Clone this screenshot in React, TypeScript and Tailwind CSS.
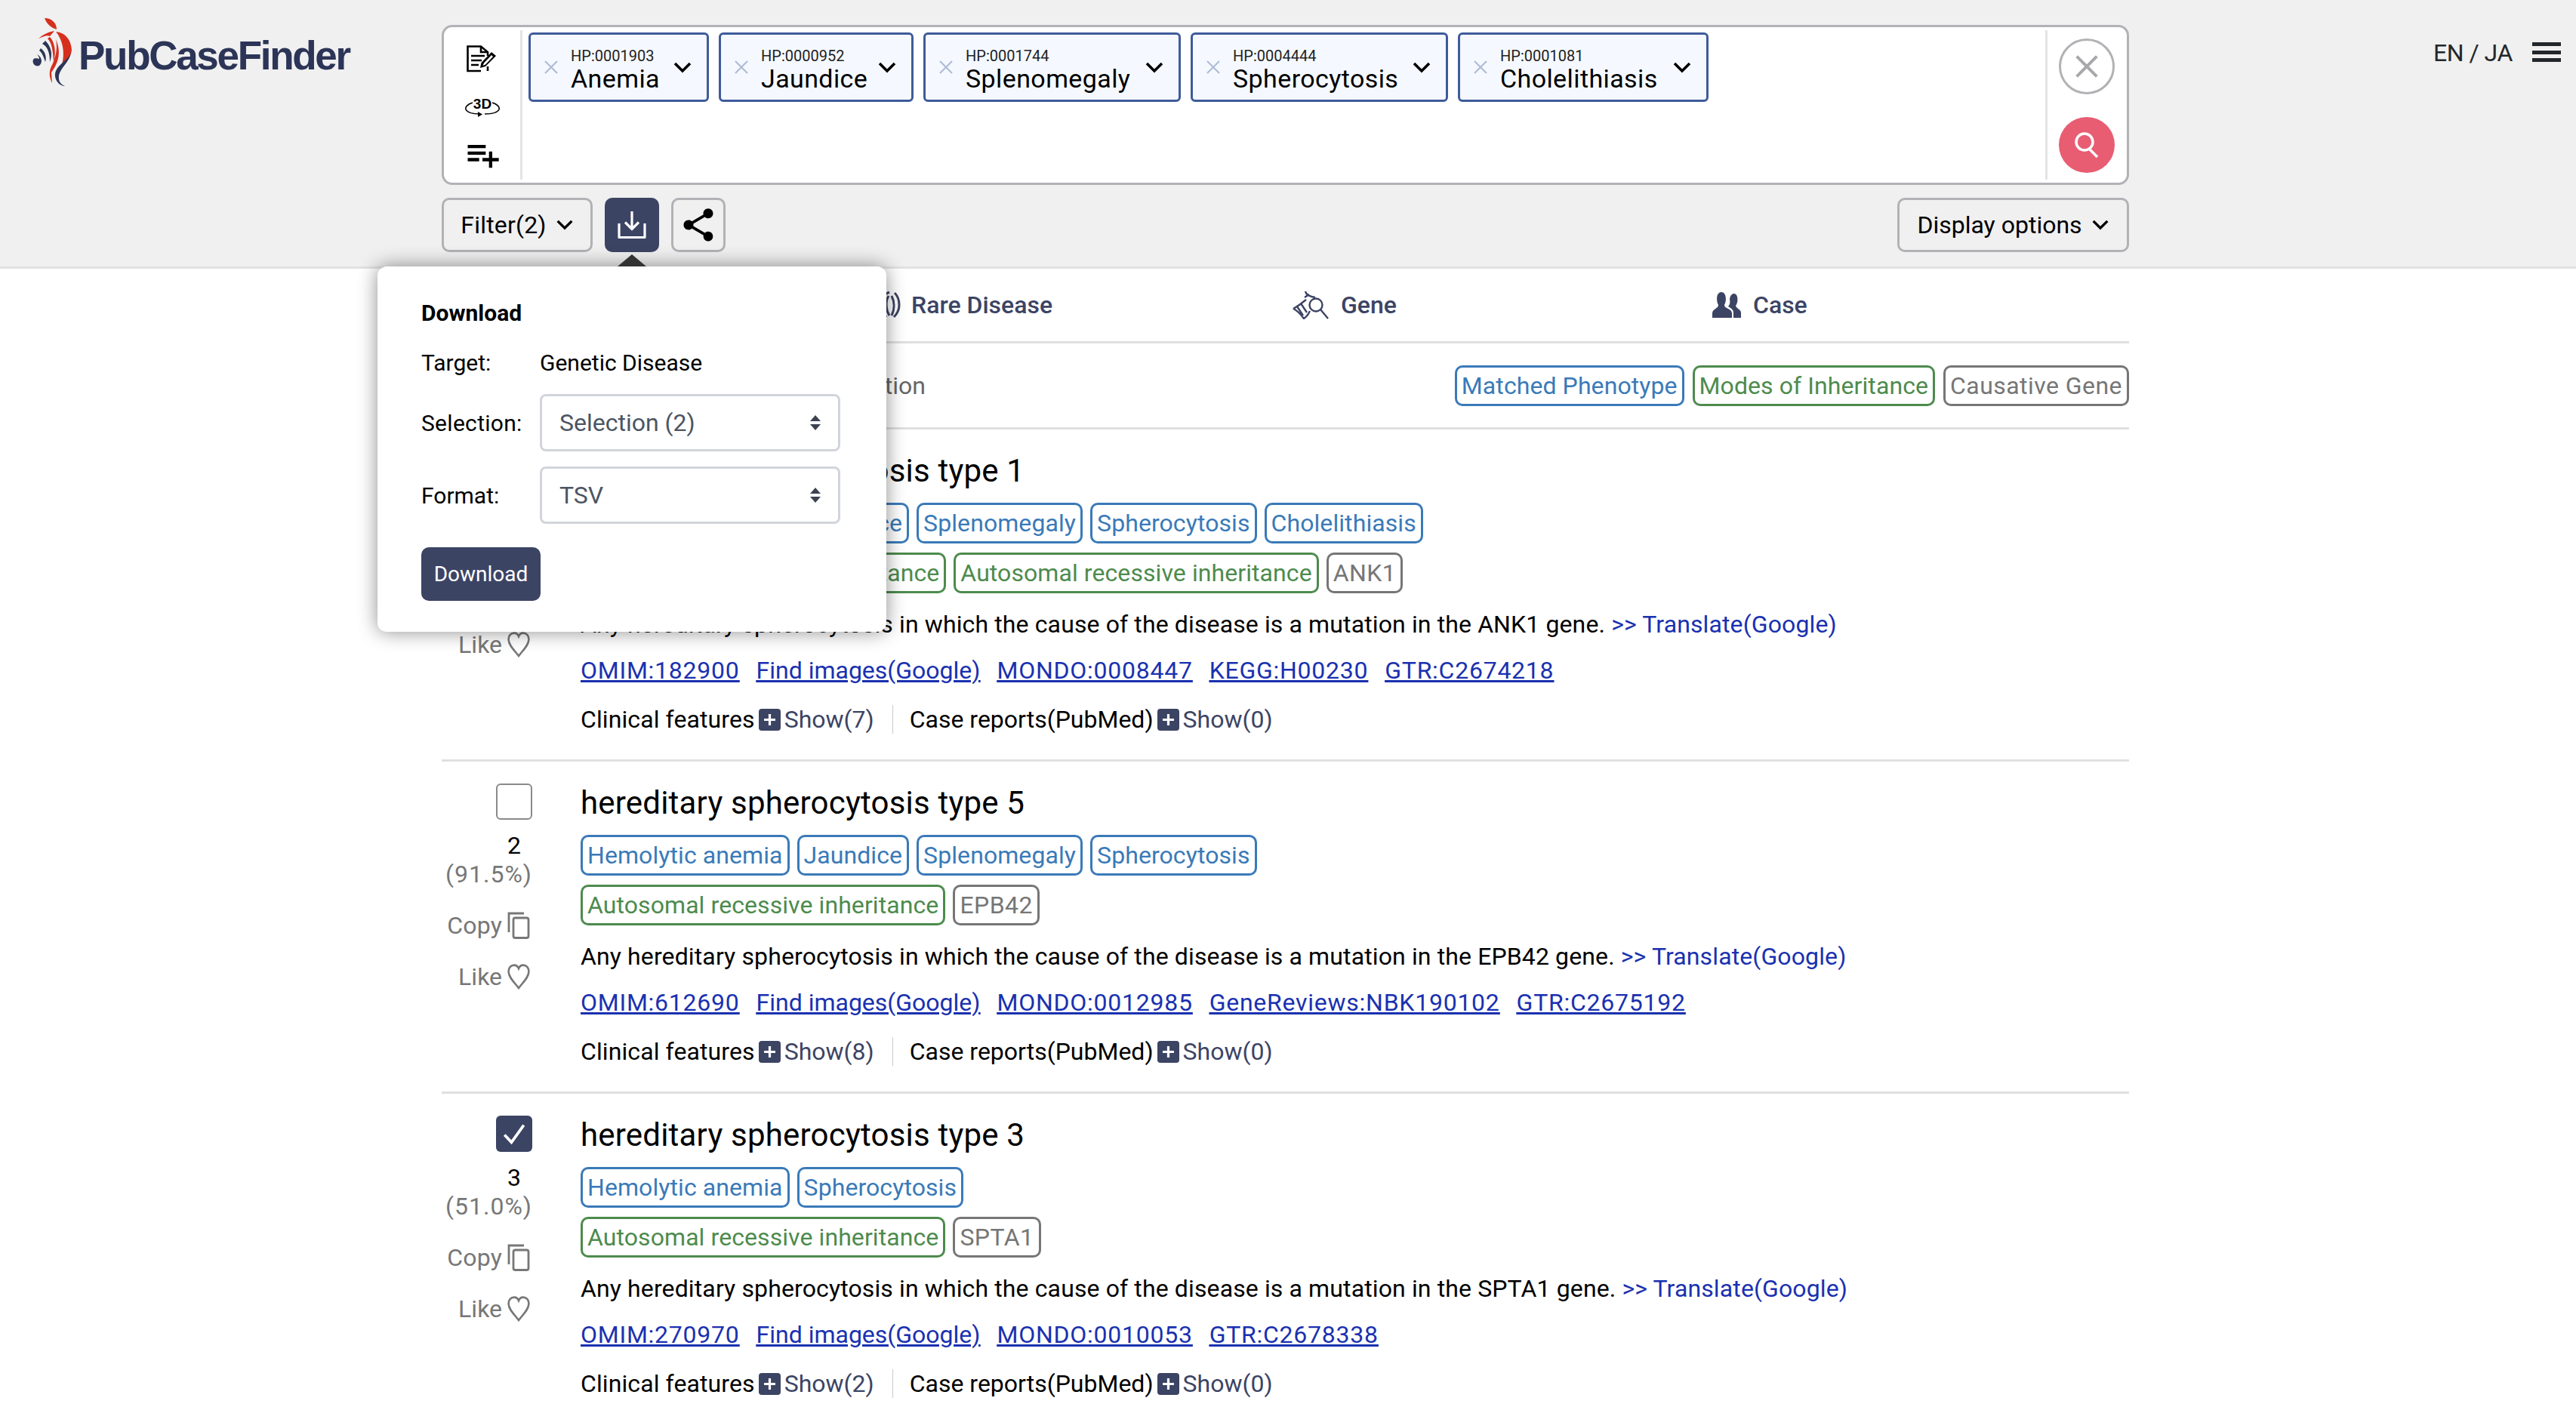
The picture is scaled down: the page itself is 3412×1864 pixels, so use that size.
import React from "react";
import { MdPlaylistAdd, MdShare } from "react-icons/md";

const Chevron = ({ className }: { className: string }) => (
  <svg viewBox="0 0 24 15" className={className} fill="none" stroke="currentColor" strokeWidth="3.6">
    <polyline points="2,2 12,12 22,2" />
  </svg>
);

const Logo = () => (
  <div className="flex items-start">
    <svg viewBox="0 0 56 92" className="w-[56px] h-[92px] mt-[22px] ml-[42px] shrink-0">
      <g fill="#d62f1e">
        <path d="M17 2 C26 2 33 8 33 17 C26 15 20 10 17 2Z" />
        <path d="M9 29 C16 23 23 20 30 19 L24 26 C20 24 15 27 9 29Z" />
        <path d="M24 27 C30 33 33 46 29 60 C28 45 27 35 21 29Z" />
        <path d="M32 20 C44 21 52 30 53 44 C52 55 44 62 38 70 C44 55 44 35 32 20Z" />
        <path d="M32 30 C38 44 38 58 26 74 L27 88 C23 80 22 72 28 62 C33 50 34 40 32 30Z" />
      </g>
      <g fill="#2c3557">
        <path d="M52 48 C50 60 38 68 36 78 C35 88 40 90 44 92 C36 92 28 82 32 72 C36 62 48 58 52 48Z" />
        <path d="M18 32 C26 40 28 50 24 60 C24 50 22 40 14 36Z" />
        <path d="M12 42 C18 46 20 54 18 60 C16 54 14 48 10 45Z" />
        <path d="M7 50 C12 52 16 60 10 65 C5 67 0 62 2 57 C4 54 8 56 10 56 C10 54 9 52 7 50Z" />
      </g>
    </svg>
    <span className="mt-[39px] ml-[6px] font-['Liberation_Sans',sans-serif] font-bold text-[53px] leading-[70px] tracking-[-2.3px] text-[#2c3557]">
      PubCaseFinder
    </span>
  </div>
);

const NoteIcon = () => (
  <svg viewBox="0 0 42 36" className="w-[42px] h-[36px]" fill="none" stroke="#000" strokeWidth="2.6">
    <path d="M19 34 H1.5 V1.5 H19 L28 9 V14" />
    <path d="M19 2 V9 H28" />
    <path d="M6 14 H24 M6 20 H20 M6 26 H16" strokeWidth="2.4" />
    <path d="M28 34 V28" />
    <path d="M18 30 L19.5 23 L33 9 L39 14 L25 28Z" fill="#000" stroke="none" />
    <path d="M21.5 27 L23 23.5 L33 13 L35 15 L25 25.5Z" fill="#fff" stroke="none" />
  </svg>
);

const ThreeDIcon = () => (
  <div className="relative w-[46px] h-[28px] flex justify-center">
    <span className="font-['Liberation_Sans',sans-serif] font-bold text-[19px] leading-[20px] text-black">3D</span>
    <svg viewBox="0 0 46 28" className="absolute left-0 top-0 w-[46px] h-[28px]" fill="none" stroke="#000" strokeWidth="1.6">
      <path d="M10 8 C3 10 0 14 1 17 C3 21 10 23 20 23" />
      <path d="M36 8 C43 10 46 14 45 17 C43 21 36 23 26 23" />
      <path d="M17 20 L23 23.5 L17 27Z" fill="#000" stroke="none" />
    </svg>
  </div>
);

const DownloadIcon = () => (
  <svg viewBox="0 0 38 38" className="w-[38px] h-[38px]" fill="none" stroke="#fff" strokeWidth="3.2">
    <path d="M19 1 V24 M10 15.5 L19 24.5 L28 15.5" />
    <path d="M2 17 V35.5 H36 V17" strokeLinejoin="round" />
  </svg>
);

const RareIcon = () => (
  <svg viewBox="0 0 28 36" className="w-[28px] h-[36px]" fill="none" stroke="#3c4464" strokeWidth="3">
    <path d="M2 18 C2 8 7 3 13 1 M9 34 C5 30 2 25 2 18 M26 18 C26 10 23 5 20 2 M26 18 C26 25 23 30 19 34" />
    <path d="M12 6 C7 14 9 26 13 32 M16 6 C20 14 20 24 16 32" />
  </svg>
);

const GeneIcon = () => (
  <svg viewBox="0 0 48 38" className="w-[48px] h-[38px]" fill="none" stroke="#3c4464" strokeWidth="2.4">
    <circle cx="31" cy="19" r="8.5" />
    <path d="M37 25 L47 37" />
    <path d="M17 1 C18 6 22 8 30 9 M16 9 L22 5 M1 24 C8 20 12 17 18 12 M1 24 C6 26 12 33 15 37 C20 34 21 31 23 27 M6 21 L14 33 M11 17 L19 29" />
  </svg>
);

const CaseIcon = () => (
  <svg viewBox="0 0 38 34" className="w-[38px] h-[34px]" fill="#3c4464">
    <path d="M0 34 V28 C0 22 8 22 8 17 C5 12 5 0 12 0 C19 0 19 12 16 17 C16 22 26 22 26 28 V34Z" />
    <path d="M28 34 V27 C28 23 24 21 21 19 C23 17 24 14 23 9 C24 4 26 2 29 2 C34 2 35 13 31 18 C32 22 38 23 38 27 V34Z" />
  </svg>
);

const CopyIcon = () => (
  <svg viewBox="0 0 30 36" className="w-[30px] h-[36px]" fill="none" stroke="#777" strokeWidth="2.8">
    <path d="M2 27 V2 H22" />
    <rect x="8" y="8" width="20" height="26.5" rx="2.5" />
  </svg>
);

const HeartIcon = () => (
  <svg viewBox="0 0 30 34" className="w-[30px] h-[34px]" fill="none" stroke="#777" strokeWidth="2.6">
    <path d="M15 32 C9 24 2 18 1.6 10.5 C1.4 5 5 1.6 9 1.6 C11.8 1.6 14 3.4 15 6 C16 3.4 18.2 1.6 21 1.6 C25 1.6 28.6 5 28.4 10.5 C28 18 21 24 15 32Z" />
  </svg>
);

const PlusBox = () => (
  <span className="w-[29px] h-[29px] rounded-[4px] bg-[#3c4464] flex items-center justify-center mx-[5px] shrink-0">
    <svg viewBox="0 0 16 16" className="w-[17px] h-[17px]" fill="none" stroke="#fff" strokeWidth="3">
      <path d="M8 1 V15 M1 8 H15" />
    </svg>
  </span>
);

const UpDown = () => (
  <svg viewBox="0 0 16 20" className="w-[16px] h-[20px]" fill="#3c4250">
    <path d="M8 0 L15 8 H1Z M8 20 L15 12 H1Z" />
  </svg>
);

const Tag = ({ label, tone }: { label: string; tone: "blue" | "green" | "gray" }) => {
  const toneClass =
    tone === "blue"
      ? "border-[#3a7ab8] text-[#3a7ab8] tracking-[0.08px]"
      : tone === "green"
        ? "border-[#4d8b4d] text-[#4d8b4d] tracking-[0.08px]"
        : "border-[#767676] text-[#767676] tracking-[0.45px]";
  return (
    <span className={`inline-flex items-center h-[54px] px-[6px] border-[3px] rounded-[10px] whitespace-nowrap ${toneClass}`}>
      {label}
    </span>
  );
};

type Row = {
  rank: string;
  score: string;
  checked: boolean;
  title: string;
  phenotypes: string[];
  modes: string[];
  gene: string;
  links: string[];
  features: string;
};

const rows: Row[] = [
  {
    rank: "1",
    score: "(100%)",
    checked: true,
    title: "hereditary spherocytosis type 1",
    phenotypes: ["Hemolytic anemia", "Jaundice", "Splenomegaly", "Spherocytosis", "Cholelithiasis"],
    modes: ["Autosomal dominant inheritance", "Autosomal recessive inheritance"],
    gene: "ANK1",
    links: ["OMIM:182900", "Find images(Google)", "MONDO:0008447", "KEGG:H00230", "GTR:C2674218"],
    features: "Show(7)",
  },
  {
    rank: "2",
    score: "(91.5%)",
    checked: false,
    title: "hereditary spherocytosis type 5",
    phenotypes: ["Hemolytic anemia", "Jaundice", "Splenomegaly", "Spherocytosis"],
    modes: ["Autosomal recessive inheritance"],
    gene: "EPB42",
    links: ["OMIM:612690", "Find images(Google)", "MONDO:0012985", "GeneReviews:NBK190102", "GTR:C2675192"],
    features: "Show(8)",
  },
  {
    rank: "3",
    score: "(51.0%)",
    checked: true,
    title: "hereditary spherocytosis type 3",
    phenotypes: ["Hemolytic anemia", "Spherocytosis"],
    modes: ["Autosomal recessive inheritance"],
    gene: "SPTA1",
    links: ["OMIM:270970", "Find images(Google)", "MONDO:0010053", "GTR:C2678338"],
    features: "Show(2)",
  },
];

const chips = [
  { id: "HP:0001903", name: "Anemia", w: "w-[239px]" },
  { id: "HP:0000952", name: "Jaundice", w: "w-[258px]" },
  { id: "HP:0001744", name: "Splenomegaly", w: "w-[341px]" },
  { id: "HP:0004444", name: "Spherocytosis", w: "w-[341px]" },
  { id: "HP:0001081", name: "Cholelithiasis", w: "w-[332px]" },
];

const ResultRow = ({ row }: { row: Row }) => (
  <div className="h-[440px] border-t-[3px] border-[#e0e0e0] flex gap-[64px]">
    <div className="w-[120px] shrink-0 pt-[29px] flex flex-col items-end text-[#777]">
      {row.checked ? (
        <span className="w-[48px] h-[48px] rounded-[6px] bg-[#3c4464] flex items-center justify-center">
          <svg viewBox="0 0 24 24" className="w-[34px] h-[34px]" fill="none" stroke="#fff" strokeWidth="2.6">
            <path d="M3 13 L9.5 20 L21 4" />
          </svg>
        </span>
      ) : (
        <span className="w-[48px] h-[48px] rounded-[6px] border-[2px] border-[#8a8a8a] bg-white" />
      )}
      <span className="w-[48px] text-center text-black h-[38px] leading-[38px] mt-[15px]">{row.rank}</span>
      <span className="h-[38px] leading-[38px] tracking-[1px]">{row.score}</span>
      <span className="flex items-center gap-[7px] h-[38px] mt-[30px] pr-[3px] tracking-[0.2px]">
        Copy <CopyIcon />
      </span>
      <span className="flex items-center gap-[7px] h-[38px] mt-[30px] pr-[3px]">
        Like <HeartIcon />
      </span>
    </div>
    <div className="flex-1 pt-[23px]">
      <h2 className="text-[42px] leading-[60px] h-[60px] pt-[2px] text-black tracking-[0.2px]">{row.title}</h2>
      <div className="flex gap-[10px] mt-[14px]">
        {row.phenotypes.map((p) => (
          <Tag key={p} label={p} tone="blue" />
        ))}
      </div>
      <div className="flex gap-[10px] mt-[12px]">
        {row.modes.map((m) => (
          <Tag key={m} label={m} tone="green" />
        ))}
        <Tag label={row.gene} tone="gray" />
      </div>
      <p className="h-[48px] leading-[48px] mt-[17px] text-black whitespace-nowrap tracking-[0.12px]">
        Any hereditary spherocytosis in which the cause of the disease is a mutation in the {row.gene} gene.{" "}
        <span className="text-[#1a31b0]">&gt;&gt; Translate(Google)</span>
      </p>
      <div className="flex gap-[22px] h-[48px] leading-[48px] mt-[13px] text-[#1a31b0] underline">
        {row.links.map((l) => (
          <a key={l} className={l.startsWith("Find") ? "" : "tracking-[0.75px]"}>
            {l}
          </a>
        ))}
      </div>
      <div className="flex items-center h-[48px] mt-[17px] text-black">
        <span className="tracking-[0.1px]">Clinical features</span>
        <PlusBox />
        <span className="text-[#3c4464]">{row.features}</span>
        <span className="w-[1px] h-[38px] bg-[#ccc] ml-[24px] mr-[22px]" />
        Case reports(PubMed)
        <PlusBox />
        <span className="text-[#3c4464]">Show(0)</span>
      </div>
    </div>
  </div>
);

const App: React.FC = () => {
  return (
    <div className="relative w-[3412px] h-[1864px] overflow-hidden bg-white font-['Roboto',sans-serif] text-[32px] text-black">
      {/* Header */}
      <div className="h-[356px] bg-[#f0f0f0] border-b-[3px] border-[#e2e2e2] flex">
        <div className="w-[585px] shrink-0">
          <Logo />
        </div>
        <div className="w-[2235px] shrink-0 pt-[33px]">
          <div className="h-[212px] bg-white border-[3px] border-[#b2b2b6] rounded-[14px] flex">
            <div className="w-[104px] shrink-0 my-[4px] border-r-[3px] border-[#e4e4e4] flex flex-col items-center justify-between pt-[20px] pb-[15px] pl-[1px]">
              <NoteIcon />
              <ThreeDIcon />
              <MdPlaylistAdd className="w-[52px] h-[52px] -my-[8px]" />
            </div>
            <div className="flex-1 flex items-start gap-[13px] pl-[8px] pt-[7px]">
              {chips.map((c) => (
                <div key={c.id} className={`${c.w} h-[92px] shrink-0 rounded-[6px] border-[3px] border-[#3f5b9b] bg-[#f5f9ff] flex items-center pl-[17px] pr-[20px]`}>
                  <svg viewBox="0 0 20 20" className="w-[20px] h-[20px] shrink-0 mr-[16px]" fill="none" stroke="#afbcd6" strokeWidth="2.2">
                    <path d="M2 2 L18 18 M18 2 L2 18" />
                  </svg>
                  <div className="flex-1 flex flex-col pt-[5px]">
                    <span className="text-[20px] leading-[24px] text-[#222]">{c.id}</span>
                    <span className="text-[34px] leading-[36px] tracking-[0.4px] whitespace-nowrap">{c.name}</span>
                  </div>
                  <Chevron className="w-[24px] h-[15px] shrink-0" />
                </div>
              ))}
            </div>
            <div className="w-[108px] shrink-0 my-[4px] border-l-[3px] border-[#e4e4e4] flex flex-col items-center gap-[30px] pt-[11px] pr-[2px]">
              <span className="w-[74px] h-[74px] rounded-full border-[3px] border-[#b2b2b6] flex items-center justify-center">
                <svg viewBox="0 0 24 24" className="w-[32px] h-[32px]" fill="none" stroke="#a8a8ac" strokeWidth="3">
                  <path d="M2 2 L22 22 M22 2 L2 22" />
                </svg>
              </span>
              <span className="w-[74px] h-[74px] rounded-full bg-[#e85d72] flex items-center justify-center">
                <svg viewBox="0 0 36 36" className="w-[36px] h-[36px]" fill="none" stroke="#fff" strokeWidth="3.5">
                  <circle cx="15" cy="14" r="11" />
                  <path d="M21 23 L32 34" />
                </svg>
              </span>
            </div>
          </div>
          <div className="flex items-start mt-[17px]">
            <span className="h-[72px] w-[200px] border-[3px] border-[#b2b2b6] rounded-[10px] flex items-center justify-center gap-[12px] tracking-[0.2px]">
              Filter(2) <Chevron className="w-[24px] h-[14px]" />
            </span>
            <span className="h-[72px] w-[72px] ml-[16px] rounded-[10px] bg-[#3c4464] flex items-center justify-center">
              <DownloadIcon />
            </span>
            <span className="h-[72px] w-[72px] ml-[16px] border-[3px] border-[#b2b2b6] rounded-[10px] flex items-center justify-center">
              <MdShare className="w-[52px] h-[52px]" />
            </span>
            <span className="h-[72px] w-[307px] ml-auto border-[3px] border-[#b2b2b6] rounded-[10px] flex items-center justify-center gap-[12px]">
              Display options <Chevron className="w-[24px] h-[14px]" />
            </span>
          </div>
        </div>
        <div className="flex-1 pt-[50px] pl-[403px] flex items-start text-[#23272b]">
          <span className="whitespace-nowrap leading-[40px] tracking-[-0.5px]">EN / JA</span>
          <span className="ml-[26px] mt-[6px] w-[38px] h-[26px] flex flex-col justify-between">
            <span className="h-[5px] bg-[#23272b]" />
            <span className="h-[5px] bg-[#23272b]" />
            <span className="h-[5px] bg-[#23272b]" />
          </span>
        </div>
      </div>

      {/* Results */}
      <div className="ml-[585px] w-[2235px]">
        <div className="h-[96px] grid grid-cols-[580px_547px_556px_1fr] items-center font-medium text-[#3c4464]">
          <span className="pl-[40px]">Genetic Disease</span>
          <span className="flex items-center gap-[14px]">
            <RareIcon /> Rare Disease
          </span>
          <span className="flex items-center gap-[16px]">
            <GeneIcon /> Gene
          </span>
          <span className="flex items-center gap-[16px]">
            <CaseIcon /> Case
          </span>
        </div>
        <div className="h-[114px] border-t-[3px] border-[#e0e0e0] flex items-center justify-between">
          <span className="w-[641px] text-right text-[#666]">Description</span>
          <div className="flex gap-[11px]">
            <Tag label="Matched Phenotype" tone="blue" />
            <Tag label="Modes of Inheritance" tone="green" />
            <Tag label="Causative Gene" tone="gray" />
          </div>
        </div>
        {rows.map((r) => (
          <ResultRow key={r.rank} row={r} />
        ))}
      </div>

      {/* Download popover */}
      <div className="absolute left-[500px] top-[353px] w-[674px] h-[484px] bg-white rounded-[12px] shadow-[0_0_26px_rgba(0,0,0,0.45)] pl-[58px] pr-[61px] pt-[40px]">
        <span className="absolute left-[318px] -top-[16px] w-0 h-0 border-x-[19px] border-x-transparent border-b-[16px] border-b-[#333]" />
        <div className="font-bold text-[30px] leading-[44px]">Download</div>
        <div className="flex items-center h-[44px] mt-[21px] text-[30px]">
          <span className="w-[157px]">Target:</span>
          <span>Genetic Disease</span>
        </div>
        <div className="flex items-center mt-[20px] text-[30px]">
          <span className="w-[157px] tracking-[0.3px]">Selection:</span>
          <div className="flex-1 h-[76px] border-[3px] border-[#d1d5db] rounded-[8px] flex items-center justify-between pl-[23px] pr-[22px] text-[#4b5563] text-[32px]">
            Selection (2) <UpDown />
          </div>
        </div>
        <div className="flex items-center mt-[20px] text-[30px]">
          <span className="w-[157px]">Format:</span>
          <div className="flex-1 h-[76px] border-[3px] border-[#d1d5db] rounded-[8px] flex items-center justify-between pl-[23px] pr-[22px] text-[#4b5563] text-[32px]">
            TSV <UpDown />
          </div>
        </div>
        <div className="mt-[31px] w-[158px] h-[71px] rounded-[10px] bg-[#3c4464] text-white text-[28px] flex items-center justify-center">
          Download
        </div>
      </div>
    </div>
  );
};

export default App;
